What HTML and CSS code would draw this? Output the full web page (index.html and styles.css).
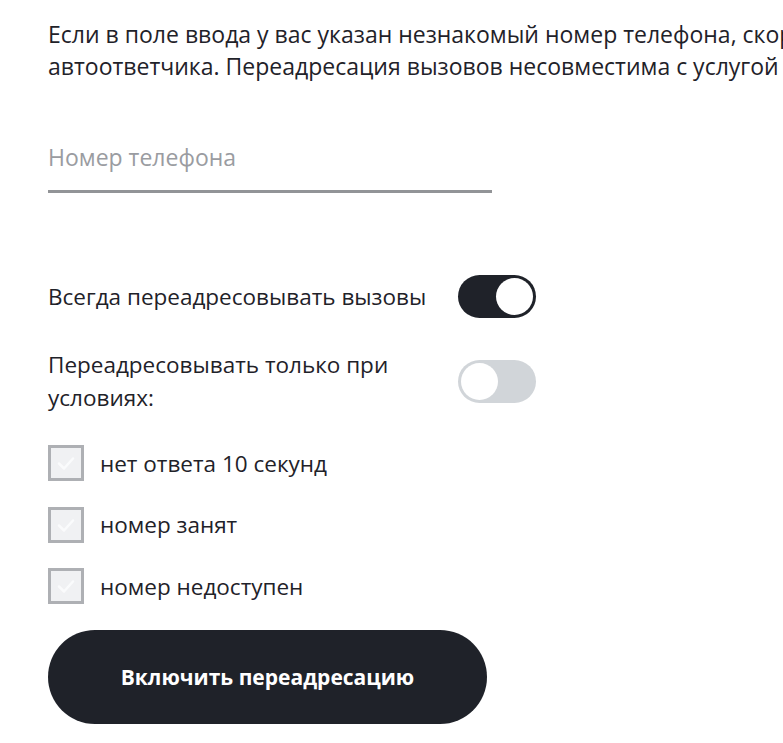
FILE: index.html
```html
<!DOCTYPE html>
<html lang="ru">
<head>
    <meta charset="UTF-8">
    <meta name="viewport" content="width=device-width, initial-scale=1.0">
    <title>Переадресация вызовов</title>
    <link rel="stylesheet" href="styles.css">
</head>
<body>
    <div class="forward">
        <p class="intro">Если в поле ввода у вас указан незнакомый номер телефона, скорее всего, это номер<br>автоответчика. Переадресация вызовов несовместима с услугой «Автоответчик».</p>

        <label class="phone-field">
            <input type="tel" class="phone-input" placeholder="Номер телефона">
        </label>

        <div class="options">
            <div class="option-row">
                <span class="option-label">Всегда переадресовывать вызовы</span>
                <span class="toggle toggle-on"><span class="knob"></span></span>
            </div>
            <div class="option-row">
                <span class="option-label">Переадресовывать только при условиях:</span>
                <span class="toggle"><span class="knob"></span></span>
            </div>

            <ul class="conditions">
                <li class="condition">
                    <span class="checkbox">
                        <svg viewBox="0 0 30 30" width="30" height="30"><path d="M8 15.5l5 5 9-10" fill="none" stroke="#fafbfc" stroke-width="2.5" stroke-linecap="round" stroke-linejoin="round"/></svg>
                    </span>
                    нет ответа 10 секунд
                </li>
                <li class="condition">
                    <span class="checkbox">
                        <svg viewBox="0 0 30 30" width="30" height="30"><path d="M8 15.5l5 5 9-10" fill="none" stroke="#fafbfc" stroke-width="2.5" stroke-linecap="round" stroke-linejoin="round"/></svg>
                    </span>
                    номер занят
                </li>
                <li class="condition">
                    <span class="checkbox">
                        <svg viewBox="0 0 30 30" width="30" height="30"><path d="M8 15.5l5 5 9-10" fill="none" stroke="#fafbfc" stroke-width="2.5" stroke-linecap="round" stroke-linejoin="round"/></svg>
                    </span>
                    номер недоступен
                </li>
            </ul>
        </div>

        <button class="submit">Включить переадресацию</button>
    </div>
</body>
</html>
```

FILE: styles.css
```css
html, body {
    overflow-x: hidden;
}

body {
    margin: 0;
    padding: 0 0 0 48px;
    font-family: "Open Sans", "Noto Sans", sans-serif;
    color: #1f2229;
    background-color: #fff;
}

.forward {
    width: 700px;
}

.intro {
    margin: 18px 0 0;
    font-size: 23px;
    line-height: 32px;
    white-space: nowrap;
}

.phone-field {
    display: block;
    width: 444px;
    margin-top: 51px;
}

.phone-input {
    display: block;
    width: 100%;
    box-sizing: border-box;
    height: 60px;
    padding: 0 0 10px;
    border: none;
    border-bottom: 3px solid #929497;
    font-family: inherit;
    font-size: 23px;
    color: #1f2229;
    outline: none;
}

.phone-input::placeholder {
    color: #9a9ca1;
}

.options {
    margin-top: 82px;
    width: 488px;
}

.option-row {
    display: flex;
    align-items: center;
    justify-content: space-between;
    gap: 20px;
    font-size: 22.5px;
    line-height: 33px;
    margin-bottom: 30px;
}

.option-label {
    max-width: 390px;
}

.toggle {
    flex: 0 0 auto;
    position: relative;
    width: 78px;
    height: 43px;
    border-radius: 22px;
    background-color: #d1d5d9;
}

.toggle .knob {
    position: absolute;
    top: 3px;
    left: 3px;
    width: 37px;
    height: 37px;
    border-radius: 50%;
    background-color: #fff;
}

.toggle-on {
    background-color: #1f2229;
}

.toggle-on .knob {
    left: 38px;
}

.conditions {
    list-style: none;
    margin: 0;
    padding: 1px 0 0;
}

.condition {
    display: flex;
    align-items: center;
    gap: 16px;
    height: 36px;
    margin-bottom: 25.5px;
    font-size: 22.5px;
}

.checkbox {
    display: flex;
    align-items: center;
    justify-content: center;
    width: 36px;
    height: 36px;
    box-sizing: border-box;
    border: 3px solid #aeb0b4;
    background-color: #f0f1f3;
}

.submit {
    display: block;
    width: 439px;
    height: 94px;
    margin-top: 0;
    border: none;
    border-radius: 47px;
    background-color: #1f2229;
    color: #fff;
    font-family: inherit;
    font-size: 21px;
    font-weight: 700;
    cursor: pointer;
}
```
